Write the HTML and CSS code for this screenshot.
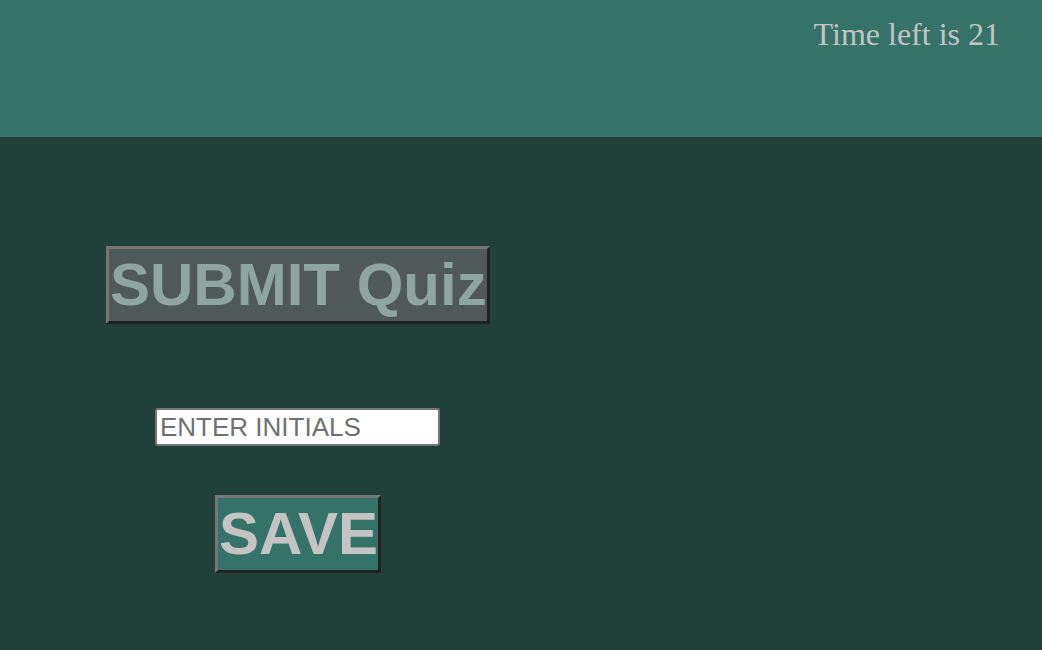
FILE: index.html
```html
<!DOCTYPE html>
<html>
<head>
<meta charset="utf-8">
<link rel="stylesheet" href="styles.css">
</head>
<body>
<header class="top">
  <div class="timer">Time left is 21</div>
</header>
<main class="content">
  <div class="submit-row"><button class="btn btn-submit">SUBMIT Quiz</button></div>
  <div class="input-row"><input class="initials" type="text" placeholder="ENTER INITIALS"></div>
  <div class="save-row"><button class="btn btn-save">SAVE</button></div>
</main>
</body>
</html>
```
FILE: styles.css
```css
html, body { margin: 0; padding: 0; }
body {
  background: #204039;
  width: 1042px;
  height: 650px;
  overflow: hidden;
  font-family: "Liberation Serif", serif;
}
.top {
  background: #357369;
  height: 137px;
  display: flex;
  justify-content: flex-end;
  align-items: flex-start;
  padding-right: 42px;
  box-sizing: border-box;
}
.timer {
  color: #c4c4c4;
  font-size: 32px;
  margin-top: 16px;
}
.content {
  display: flex;
  flex-direction: column;
}
.submit-row { padding: 109px 0 0 106px; }
.input-row { padding: 84px 0 0 155px; }
.save-row { padding: 49px 0 0 215px; }
.btn {
  font-family: "Liberation Sans", Arial, sans-serif;
  font-weight: bold;
  font-size: 60px;
  line-height: 72px;
  padding: 0 0 0 1px;
  border-width: 3px;
  border-color: #767676 #222 #222 #767676;
  border-style: solid;
  display: block;
}
.btn-submit { background: #4f5a58; color: #8fa5a1; }
.btn-save { background: #357369; color: #c4c4c4; }
.initials {
  width: 285px;
  height: 38px;
  box-sizing: border-box;
  border: 2px solid #767676;
  border-radius: 3px;
  background: #fff;
  font-family: "Liberation Sans", Arial, sans-serif;
  font-size: 26px;
  padding: 0 3px;
  display: block;
}
.initials::placeholder { color: #707070; }
```
